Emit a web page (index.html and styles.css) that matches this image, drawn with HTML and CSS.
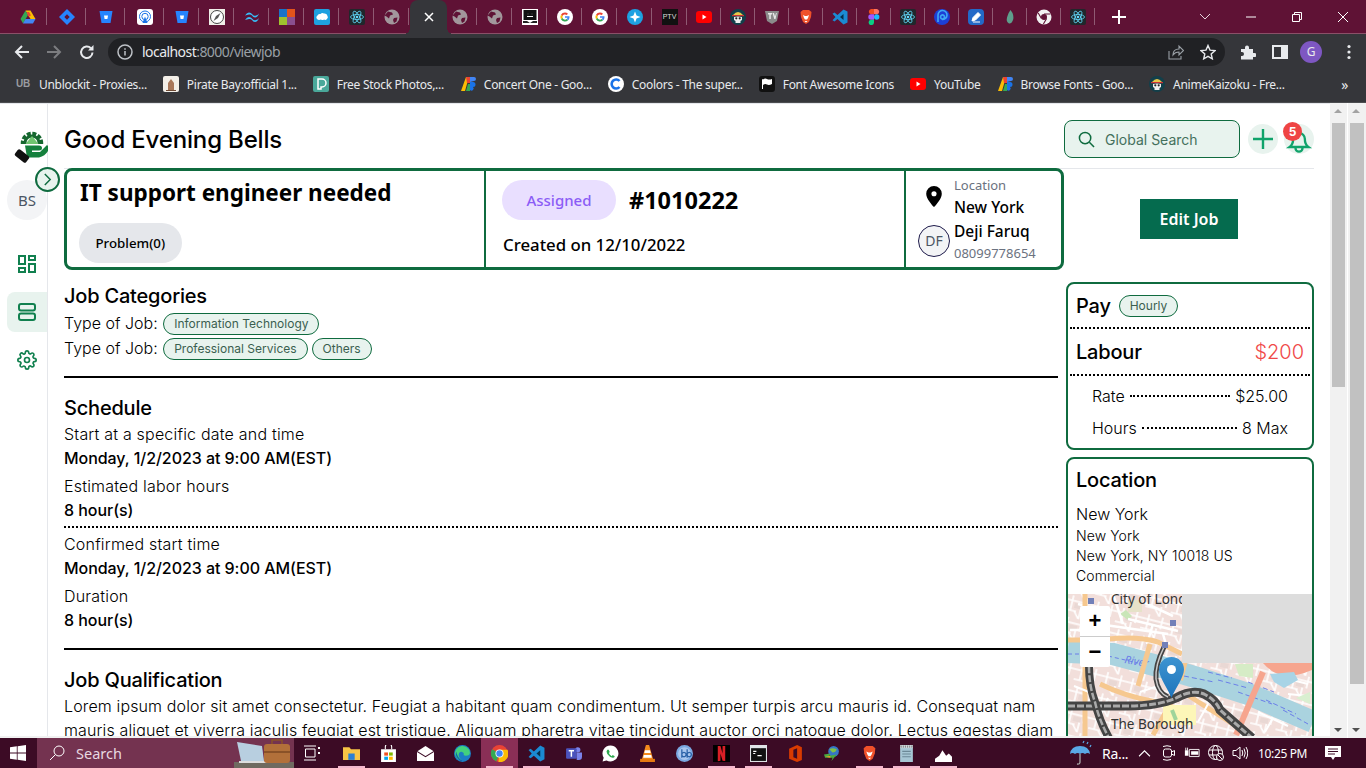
FILE: index.html
```html
<!DOCTYPE html>
<html lang="en">
<head>
<meta charset="UTF-8">
<meta name="viewport" content="width=device-width, initial-scale=1.0">
<title>View Job</title>
<link rel="stylesheet" href="styles.css">
</head>
<body>

<svg class="defs" width="0" height="0">
  <symbol id="i-globe" viewBox="0 0 16 16">
    <circle cx="8" cy="8" r="7.500" fill="#a2979c"/>
    <path d="M4 2.500l4 1 1 2-3 1-1 3-2.500-2-2-1zM10 9l3.500-.5-1 4-2.500 1.500-1-3z" fill="#5f1235"/>
  </symbol>
  <symbol id="i-react" viewBox="0 0 16 16">
    <rect width="16" height="16" rx="2" fill="#20272b"/>
    <g fill="none" stroke="#61dafb" stroke-width=".8">
      <ellipse cx="8" cy="8" rx="6.500" ry="2.500"/>
      <ellipse cx="8" cy="8" rx="6.500" ry="2.500" transform="rotate(60 8 8)"/>
      <ellipse cx="8" cy="8" rx="6.500" ry="2.500" transform="rotate(120 8 8)"/>
    </g>
    <circle cx="8" cy="8" r="1.300" fill="#61dafb"/>
  </symbol>
  <symbol id="i-bitbucket" viewBox="0 0 16 16">
    <path d="M1.500 2h13l-2 12h-9z" fill="#2684ff"/>
    <path d="M6 6.500h4l-.6 3.500H6.600z" fill="#fff"/>
  </symbol>
  <symbol id="i-google" viewBox="0 0 16 16">
    <circle cx="8" cy="8" r="8" fill="#fff"/>
    <path d="M8 3.500a4.500 4.500 0 0 1 3 1.200l-1.300 1.300A2.600 2.600 0 0 0 5.600 7.100L4 5.800A4.500 4.500 0 0 1 8 3.500z" fill="#ea4335"/>
    <path d="M4 5.800l1.600 1.300a2.600 2.600 0 0 0 0 1.800L4 10.200a4.500 4.500 0 0 1 0-4.400z" fill="#fbbc05"/>
    <path d="M4 10.200l1.600-1.300a2.600 2.600 0 0 0 4 1.200l1.500 1.200A4.500 4.500 0 0 1 4 10.200z" fill="#34a853"/>
    <path d="M12.500 8c0 1.400-.5 2.500-1.400 3.300L9.600 10.100c.5-.4.800-.9 1-1.400H8V7.200h4.400c.1.300.1.500.1.800z" fill="#4285f4"/>
  </symbol>
  <symbol id="i-blocks" viewBox="0 0 16 16">
    <path d="M1 15L6 1h3l-4 14z" fill="#fbbc04"/>
    <path d="M6 1h4v6H7z" fill="#ea4335"/>
    <path d="M10 1h4a2 2 0 0 1 0 4l-4 1z" fill="#4285f4"/>
    <path d="M6 15l2-7h2v7z" fill="#34a853"/>
    <path d="M10 6h3a2.500 2.500 0 0 1 0 5 2 2 0 0 1-3 3z" fill="#1a73e8"/>
  </symbol>
  <symbol id="i-brave" viewBox="0 0 16 16">
    <path d="M5 1h6l2.500 2-.5 5-2 5-3 2-3-2-2-5L2.500 3z" fill="#f0512a"/>
    <path d="M5 6l2 1 1 0 1 0 2-1-1 3-1 1.500h-2L6 9zM6.500 12h3L8 13.500z" fill="#fff"/>
  </symbol>
  <symbol id="i-vscode" viewBox="0 0 16 16">
    <path d="M11.500.5L15.500 2.500v11l-4 2L5.500 10l-3 2.500-2-1.200L3.500 8 .5 4.700l2-1.200 3 2.500z" fill="#1b8ad3"/>
    <path d="M11.500 5l-3.500 3 3.500 3z" fill="#062f4d"/>
  </symbol>
  <symbol id="i-skull" viewBox="0 0 16 16">
    <circle cx="8" cy="8" r="8" fill="#123f4a"/>
    <path d="M3 6q5-6 10 0z" fill="#e8c84a"/>
    <path d="M2 6h12v1.200H2z" fill="#c33"/>
    <path d="M4 8q4-1 8 0v3l-1.500 1v2h-5v-2L4 11z" fill="#eee"/>
    <circle cx="6.300" cy="9.300" r="1.100" fill="#222"/>
    <circle cx="9.700" cy="9.300" r="1.100" fill="#222"/>
  </symbol>
  <symbol id="i-youtube" viewBox="0 0 16 16">
    <rect y="2" width="16" height="12" rx="3" fill="#f00"/>
    <path d="M6.500 5.500l4 2.500-4 2.500z" fill="#fff"/>
  </symbol>
</svg>

<div class="tabbar">
  <div class="tab tab-wide"><svg class="fav" viewBox="0 0 16 16"><path d="M5.500 1.500h5L15.500 10h-5z" fill="#fbbc04"/><path d="M5.500 1.500L.5 10l2.500 4.500L8 6z" fill="#34a853"/><path d="M3 14.500h10l2.500-4.500h-10z" fill="#4285f4"/><path d="M7 3h2l2 3.500-3 1z" fill="#ea4335"/></svg></div>
  <div class="tab tab-wide"><svg class="fav" viewBox="0 0 16 16"><path d="M8 0l8 8-8 8-8-8z" fill="#2684ff"/><path d="M8 5.300L10.700 8 8 10.700 5.300 8z" fill="#5f1235"/></svg></div>
  <div class="tab tab-wide"><svg class="fav"><use href="#i-bitbucket"/></svg></div>
  <div class="tab tab-wide"><svg class="fav" viewBox="0 0 16 16"><rect width="16" height="16" rx="3" fill="#fff"/><circle cx="8" cy="7.500" r="5.500" fill="none" stroke="#1a73e8" stroke-width="1"/><circle cx="8" cy="7.500" r="3.200" fill="none" stroke="#1a73e8" stroke-width="1"/><path d="M5.500 14L8 7.500l2.500 6.500z" fill="#1a73e8"/></svg></div>
  <div class="tab"><svg class="fav"><use href="#i-bitbucket"/></svg></div>
  <div class="tab"><svg class="fav" viewBox="0 0 16 16"><rect width="16" height="16" fill="#f0efe9"/><circle cx="8" cy="8" r="6.500" fill="#fff" stroke="#444"/><path d="M11.500 4L9 9 4.500 12 7 7z" fill="#555"/></svg></div>
  <div class="tab"><svg class="fav" viewBox="0 0 16 16"><path d="M1 6.500q2-3 4-3t3.500 2 3.500 1q1.500 0 3-2-1.500 4-4 4-2 0-3-2-1.500-1.500-3-1-2 .3-4 1zM1 11q2-3 4-3t3.500 2 3.500 1q1.500 0 3-2-1.500 4-4 4-2 0-3-2-1.500-1.500-3-1-2 .3-4 1z" fill="#38bdf8"/></svg></div>
  <div class="tab"><svg class="fav" viewBox="0 0 16 16"><rect width="8" height="8" fill="#1a73c8"/><rect x="8" width="8" height="8" fill="#e2541b"/><rect y="8" width="8" height="8" fill="#9fc22e"/><rect x="8" y="8" width="8" height="8" fill="#8a4f8f"/></svg></div>
  <div class="tab"><svg class="fav" viewBox="0 0 16 16"><rect width="16" height="16" rx="2" fill="#1ea1e0"/><path d="M3 10q-1.500-2 .5-3.500Q4 4.500 6.500 5 8 3.500 10 4.500q3-.5 3.500 2.500 1 1.500-.5 3-1.500 1.500-3 .5-1.500 1-3 0-2.500 1-4-.5z" fill="#fff"/></svg></div>
  <div class="tab"><svg class="fav"><use href="#i-react"/></svg></div>
  <div class="tab"><svg class="fav"><use href="#i-globe"/></svg></div>
  <div class="tab tab-active"><svg class="tab-x" viewBox="0 0 10 10"><path d="M1 1l8 8M9 1l-8 8" stroke="#fff" stroke-width="1.500"/></svg></div>
  <div class="tab tab-after"><svg class="fav"><use href="#i-globe"/></svg></div>
  <div class="tab"><svg class="fav"><use href="#i-globe"/></svg></div>
  <div class="tab"><svg class="fav" viewBox="0 0 16 16"><rect width="16" height="16" fill="#fff"/><rect x="1.500" y="1" width="13" height="10" fill="#111"/><path d="M5 4h2v2H5zM9 4h2v2H9zM1 12h4l3 2 3-2h4v2H1z" fill="#222"/><path d="M5 7h6v1H5z" fill="#fff"/></svg></div>
  <div class="tab"><svg class="fav"><use href="#i-google"/></svg></div>
  <div class="tab"><svg class="fav"><use href="#i-google"/></svg></div>
  <div class="tab"><svg class="fav" viewBox="0 0 16 16"><circle cx="8" cy="8" r="8" fill="#1da1e2"/><path d="M8 2.500l1.500 4 4 1.500-4 1.500-1.500 4-1.500-4-4-1.500 4-1.500z" fill="#fff"/></svg></div>
  <div class="tab"><span class="fav fav-ptv">PTV</span></div>
  <div class="tab tab-n"><svg class="fav"><use href="#i-youtube"/></svg></div>
  <div class="tab tab-n"><svg class="fav"><use href="#i-skull"/></svg></div>
  <div class="tab tab-n"><svg class="fav" viewBox="0 0 16 16"><path d="M1 2h14l-2 10-5 3-5-3z" fill="#8b8b8b"/><path d="M4 4h4v1.500H6.800V10H5.300V5.500H4zM8.500 4h1.500l1 3.500L12 4h.8L11.500 10h-1.200z" fill="#e8e8e8"/></svg></div>
  <div class="tab tab-n"><svg class="fav"><use href="#i-brave"/></svg></div>
  <div class="tab tab-n"><svg class="fav"><use href="#i-vscode"/></svg></div>
  <div class="tab tab-n"><svg class="fav" viewBox="0 0 16 16"><path d="M5 0h3v5.300H5a2.700 2.700 0 0 1 0-5.300z" fill="#f24e1e"/><path d="M8 0h3a2.700 2.700 0 0 1 0 5.300H8z" fill="#ff7262"/><path d="M5 5.300h3v5.400H5a2.700 2.700 0 0 1 0-5.400z" fill="#a259ff"/><circle cx="10.700" cy="8" r="2.700" fill="#1abcfe"/><path d="M5 10.700h3v2.700a2.700 2.700 0 1 1-3-2.700z" fill="#0acf83"/></svg></div>
  <div class="tab tab-n"><svg class="fav"><use href="#i-react"/></svg></div>
  <div class="tab tab-n"><svg class="fav" viewBox="0 0 16 16"><circle cx="8" cy="8" r="8" fill="#1d3fd6"/><path d="M4 13V6a4.500 4.500 0 1 1 4 4.500M6.500 8a2 2 0 1 0 0-.1" fill="none" stroke="#3fa8f5" stroke-width="1.600"/></svg></div>
  <div class="tab tab-n"><svg class="fav" viewBox="0 0 16 16"><rect width="16" height="16" rx="4" fill="#2369c8"/><path d="M4 12l1-3.500 5-5 2.500 2.500-5 5zM5 13h7" fill="#fff" stroke="#fff"/></svg></div>
  <div class="tab tab-n"><svg class="fav" viewBox="0 0 16 16"><path d="M8.500 1q4 5 2.500 10-1.500 4-4 3.500Q4 13 5 8.500 6 4 8.500 1z" fill="#5f9e8c"/></svg></div>
  <div class="tab tab-n"><svg class="fav" viewBox="0 0 16 16"><circle cx="8" cy="8" r="7.500" fill="#f1f1f1"/><circle cx="8" cy="8" r="3" fill="#5f1235"/><path d="M8 5h6.500M5.400 9.500L2.200 4M10.600 9.500L7.400 15" stroke="#5f1235" stroke-width="1.100"/></svg></div>
  <div class="tab tab-n"><svg class="fav"><use href="#i-react"/></svg></div>
  <div class="newtab"><svg viewBox="0 0 14 14" width="14" height="14"><path d="M7 0v14M0 7h14" stroke="#fff" stroke-width="2"/></svg></div>
  <div class="caption">
    <svg class="cap-chev" viewBox="0 0 12 8" width="12" height="8"><path d="M1 1l5 5 5-5" fill="none" stroke="#e6d3dc" stroke-width="1"/></svg>
    <svg class="cap-btn" viewBox="0 0 12 12"><path d="M1 6h10" stroke="#fff" stroke-width="1"/></svg>
    <svg class="cap-btn" viewBox="0 0 12 12"><path d="M1.500 3.500h7v7h-7zM3.500 3.500v-2h7v7h-2" fill="none" stroke="#fff" stroke-width="1"/></svg>
    <svg class="cap-btn" viewBox="0 0 12 12"><path d="M1 1l10 10M11 1L1 11" stroke="#fff" stroke-width="1"/></svg>
  </div>
</div>

<div class="toolbar">
  <svg class="tool tool-back" viewBox="0 0 16 16"><path d="M15 8H2M8 2L2 8l6 6" fill="none" stroke="#e8eaed" stroke-width="2"/></svg>
  <svg class="tool tool-fwd" viewBox="0 0 16 16"><path d="M1 8h13M8 2l6 6-6 6" fill="none" stroke="#7c7d80" stroke-width="2"/></svg>
  <svg class="tool tool-reload" viewBox="0 0 16 16"><path d="M13.500 8.500a5.700 5.700 0 1 1-1.600-4.200" fill="none" stroke="#e8eaed" stroke-width="2"/><path d="M14.500 1v5.500H9z" fill="#e8eaed"/></svg>
  <div class="omnibox">
    <svg class="omni-info" viewBox="0 0 16 16"><circle cx="8" cy="8" r="7" fill="none" stroke="#bdc1c6" stroke-width="1.500"/><path d="M8 7v4.500M8 4.300v1.400" stroke="#bdc1c6" stroke-width="1.500"/></svg>
    <span class="url"><span class="url-host">localhost</span>:8000/viewjob</span>
    <svg class="omni-share" viewBox="0 0 16 16"><path d="M1 7v8h12v-3M5 11q0-6 6-6V2l4.500 4.500L11 11V8q-4 0-6 3z" fill="none" stroke="#9aa0a6" stroke-width="1.100"/></svg>
    <svg class="omni-star" viewBox="0 0 16 16"><path d="M8 1.500l2 4.600 5 .5-3.800 3.300 1.100 4.900L8 12.300l-4.300 2.500 1.100-4.900L1 6.600l5-.5z" fill="none" stroke="#e8eaed" stroke-width="1.400"/></svg>
  </div>
  <svg class="tool tool-puzzle" viewBox="0 0 16 16"><path d="M1 5h4V3.500a2 2 0 0 1 4 0V5h4v4h1.500a2 2 0 0 1 0 4H13v2.500H1V12h1a2 2 0 0 0 0-4H1z" fill="#e8eaed"/></svg>
  <svg class="tool tool-side" viewBox="0 0 16 16"><path d="M1 2h14v12H1z" fill="#35363a" stroke="#e8eaed" stroke-width="2"/><path d="M9 2h6v12H9z" fill="#e8eaed"/></svg>
  <span class="profile">G</span>
  <svg class="tool tool-dots" viewBox="0 0 4 16"><circle cx="2" cy="2.500" r="1.600" fill="#e8eaed"/><circle cx="2" cy="8" r="1.600" fill="#e8eaed"/><circle cx="2" cy="13.500" r="1.600" fill="#e8eaed"/></svg>
</div>

<div class="bookmarks">
  <a class="bm"><span class="bm-icon bm-ub">UB</span>Unblockit - Proxies...</a>
  <a class="bm"><svg class="bm-icon" viewBox="0 0 16 16"><rect width="16" height="16" rx="2" fill="#f3efe8"/><path d="M5 14V7l3-4 3 4v7z" fill="#a9785a"/><path d="M3 14h10v1H3z" fill="#6e4a34"/></svg>Pirate Bay:official 1...</a>
  <a class="bm"><svg class="bm-icon" viewBox="0 0 16 16"><rect width="16" height="16" rx="2" fill="#4aa89a"/><path d="M5 3h4a3 3 0 0 1 0 8H8v2H5z" fill="none" stroke="#fff" stroke-width="1.500"/></svg>Free Stock Photos,...</a>
  <a class="bm"><svg class="bm-icon"><use href="#i-blocks"/></svg>Concert One - Goo...</a>
  <a class="bm"><svg class="bm-icon" viewBox="0 0 16 16"><circle cx="8" cy="8" r="8" fill="#fff"/><path d="M11.500 5a4.500 4.500 0 1 0 0 6" fill="none" stroke="#1a73e8" stroke-width="2.600"/></svg>Coolors - The super...</a>
  <a class="bm"><svg class="bm-icon" viewBox="0 0 16 16"><rect width="16" height="16" rx="3" fill="#111"/><path d="M3 3v10h1V9q2-1.500 4-.5t5-.5V3q-3 1-5 0t-4 .5z" fill="#fff"/></svg>Font Awesome Icons</a>
  <a class="bm"><svg class="bm-icon"><use href="#i-youtube"/></svg>YouTube</a>
  <a class="bm"><svg class="bm-icon"><use href="#i-blocks"/></svg>Browse Fonts - Goo...</a>
  <a class="bm"><svg class="bm-icon"><use href="#i-skull"/></svg>AnimeKaizoku - Fre...</a>
  <span class="bm-more">»</span>
</div>

<div class="viewport">
  <div class="page">
    <aside class="sidebar">
      <svg class="logo" viewBox="0 0 34 32">
        <circle cx="18" cy="12" r="9.500" fill="none" stroke="#15672f" stroke-width="3.500" stroke-dasharray="4 1.600"/>
        <circle cx="18" cy="12" r="8.500" fill="#15672f"/>
        <rect x="4" y="13" width="29" height="12" fill="#fff"/>
        <circle cx="18" cy="12" r="5.500" fill="#fff"/>
        <path d="M18 5l6.500 8h-13z" fill="#6fc46f"/>
        <path d="M11 14.500h14q3 0 3 2.500t-3 2.500h-7v1.500h8l7-7 1 1v5q-3 5-9 6.500H13z" fill="#15803d"/>
        <rect x="1" y="21" width="14" height="8" rx="2" transform="rotate(38 8 25)" fill="#111"/>
      </svg>
      <div class="avatar-wrap">
        <span class="avatar-bs">BS</span>
        <span class="collapse"><svg viewBox="0 0 10 14" width="9" height="13"><path d="M2 1l6 6-6 6" fill="none" stroke="#0f6b3f" stroke-width="1.600"/></svg></span>
      </div>
      <nav class="side-nav">
        <span class="side-item"><svg viewBox="0 0 18 18" width="18" height="18"><path d="M1 1h6v8H1zM11 1h6v4h-6zM11 9h6v8h-6zM1 13h6v4H1z" fill="none" stroke="#11804f" stroke-width="2"/></svg></span>
        <span class="side-item side-active"><svg viewBox="0 0 18 18" width="18" height="18"><rect x="1" y="1" width="16" height="6.500" rx="2" fill="none" stroke="#11804f" stroke-width="2"/><rect x="1" y="10.500" width="16" height="6.500" rx="2" fill="none" stroke="#11804f" stroke-width="2"/></svg></span>
        <span class="side-item"><svg viewBox="0 0 24 24" width="20" height="20" fill="none" stroke="#11804f" stroke-width="2" stroke-linecap="round" stroke-linejoin="round"><circle cx="12" cy="12" r="3"/><path d="M19.400 15a1.650 1.650 0 0 0 .33 1.820l.06.06a2 2 0 1 1-2.830 2.830l-.06-.06a1.650 1.650 0 0 0-1.820-.33 1.650 1.650 0 0 0-1 1.510V21a2 2 0 1 1-4 0v-.09a1.650 1.650 0 0 0-1.080-1.510 1.650 1.650 0 0 0-1.820.33l-.06.06a2 2 0 1 1-2.830-2.830l.06-.06a1.650 1.650 0 0 0 .33-1.820 1.650 1.650 0 0 0-1.510-1H3a2 2 0 1 1 0-4h.09a1.650 1.650 0 0 0 1.510-1.080 1.650 1.650 0 0 0-.33-1.820l-.06-.06a2 2 0 1 1 2.830-2.830l.06.06a1.650 1.650 0 0 0 1.820.33H9a1.650 1.650 0 0 0 1-1.510V3a2 2 0 1 1 4 0v.09a1.650 1.650 0 0 0 1 1.510 1.650 1.650 0 0 0 1.820-.33l.06-.06a2 2 0 1 1 2.830 2.830l-.06.06a1.650 1.650 0 0 0-.33 1.820V9a1.650 1.650 0 0 0 1.510 1H21a2 2 0 1 1 0 4h-.09a1.650 1.650 0 0 0-1.510 1z"/></svg></span>
      </nav>
    </aside>

    <main class="content">
      <header class="topbar">
        <h1 class="greeting">Good Evening Bells</h1>
        <div class="search">
          <svg viewBox="0 0 18 18" width="17" height="17"><circle cx="7.500" cy="7.500" r="6" fill="none" stroke="#0f6b3f" stroke-width="1.600"/><path d="M12 12l5 5" stroke="#0f6b3f" stroke-width="1.600"/></svg>
          <span>Global Search</span>
        </div>
        <span class="round-btn"><svg viewBox="0 0 22 22" width="22" height="22"><path d="M11 1v20M1 11h20" stroke="#10a36b" stroke-width="2.400"/></svg></span>
        <span class="round-btn bell">
          <svg viewBox="0 0 24 24" width="28" height="28"><path d="M4 18q3-2 3-7a5 5 0 0 1 10 0q0 5 3 7zM9 19a3 3 0 0 0 6 0" fill="none" stroke="#10a36b" stroke-width="2"/></svg>
          <span class="badge">5</span>
        </span>
      </header>

      <section class="summary-row">
        <div class="job-card">
          <div class="job-col job-main">
            <h2 class="job-title">IT support engineer needed</h2>
            <span class="pill-problem">Problem(0)</span>
          </div>
          <div class="job-col job-status">
            <div class="status-line">
              <span class="pill-status">Assigned</span>
              <span class="job-number">#1010222</span>
            </div>
            <p class="created">Created on 12/10/2022</p>
          </div>
          <div class="job-col job-contact">
            <div class="contact-line">
              <svg class="pin" viewBox="0 0 18 24" width="18" height="22"><path d="M9 0a8.500 8.500 0 0 1 8.500 8.500C17.500 14 11 21 9 23 7 21 .5 14 .5 8.500A8.500 8.500 0 0 1 9 0z" fill="#000"/><circle cx="9" cy="8.500" r="2.800" fill="#fff"/></svg>
              <div><p class="muted">Location</p><p class="strong">New York</p></div>
            </div>
            <div class="contact-line">
              <span class="avatar-df">DF</span>
              <div><p class="strong">Deji Faruq</p><p class="muted">08099778654</p></div>
            </div>
          </div>
        </div>
        <div class="edit-cell"><button class="edit-btn">Edit Job</button></div>
      </section>

      <section class="columns">
        <div class="details">
          <h3 class="sec-title">Job Categories</h3>
          <p class="type-row">Type of Job: <span class="chip">Information Technology</span></p>
          <p class="type-row">Type of Job: <span class="chip">Professional Services</span><span class="chip">Others</span></p>
          <hr class="rule">
          <h3 class="sec-title">Schedule</h3>
          <p class="line">Start at a specific date and time</p>
          <p class="line line-b">Monday, 1/2/2023 at 9:00 AM(EST)</p>
          <p class="line line-gap">Estimated labor hours</p>
          <p class="line line-b">8 hour(s)</p>
          <hr class="dots">
          <p class="line">Confirmed start time</p>
          <p class="line line-b">Monday, 1/2/2023 at 9:00 AM(EST)</p>
          <p class="line line-gap">Duration</p>
          <p class="line line-b">8 hour(s)</p>
          <hr class="rule">
          <h3 class="sec-title">Job Qualification</h3>
          <p class="line lorem">Lorem ipsum dolor sit amet consectetur. Feugiat a habitant quam condimentum. Ut semper turpis arcu mauris id. Consequat nam mauris aliquet et viverra iaculis feugiat est tristique. Aliquam pharetra vitae tincidunt auctor orci natoque dolor. Lectus egestas diam</p>
        </div>

        <aside class="side-cards">
          <div class="card pay-card">
            <div class="pay-head"><span class="card-title">Pay</span><span class="chip">Hourly</span></div>
            <div class="pay-labour"><span class="card-title">Labour</span><span class="amount">$200</span></div>
            <div class="leader"><span>Rate</span><i></i><span>$25.00</span></div>
            <div class="leader"><span>Hours</span><i></i><span>8 Max</span></div>
          </div>
          <div class="card loc-card">
            <h3 class="card-title">Location</h3>
            <p class="loc-big">New York</p>
            <p class="loc-small">New York</p>
            <p class="loc-small">New York, NY 10018 US</p>
            <p class="loc-small">Commercial</p>
            <div class="map">
              <svg class="map-tiles" viewBox="0 0 244 144" width="244" height="144">
                <defs>
                  <clipPath id="tile"><path d="M0 0h114v69h130v75H0z"/></clipPath>
                  <pattern id="streets" width="26" height="22" patternUnits="userSpaceOnUse" patternTransform="rotate(14)">
                    <path d="M0 5h26M0 15h12M16 12v10M6 0v15M20 0v12M10 15l6 7" stroke="#fff" stroke-width="1.600" fill="none"/>
                    <path d="M9 7h8v5H9z" fill="#e9d8d4"/>
                  </pattern>
                </defs>
                <rect width="244" height="144" fill="#ddd"/>
                <g clip-path="url(#tile)">
                  <rect width="244" height="144" fill="#f2dfdb"/>
                  <rect width="244" height="144" fill="url(#streets)"/>
                  <path d="M60 6h14v12H60z" fill="#e6e2c8"/>
                  <path d="M52 20l6-4 6 6-4 4z" fill="#c9e6b8"/>
                  <path d="M0 58L45 60 90 72 130 84 180 100 245 128" fill="none" stroke="#aad3df" stroke-width="22"/>
                  <path d="M116 82l30 6M150 86l30 8M170 98l34 12M198 106l30 14M215 116l25 14M140 78l24 6M180 88l26 10" stroke="#6a7ee8" stroke-width="1" stroke-dasharray="5 3" fill="none"/>
                  <path d="M0 60H12M40 62l30 7" stroke="#6a7ee8" stroke-width="1" stroke-dasharray="4 3" fill="none"/>
                  <text x="56" y="69" class="map-river" transform="rotate(10 56 69)">River</text>
                  <path d="M10 10l30 8M45 0l10 30M60 25l50 12M30 30l70 10M75 8l30 14M2 36h30M85 30l-6 20M95 40l4 14" stroke="#fff" stroke-width="2.500" fill="none"/>
                  <path d="M40 45Q70 42 90 48L114 60" stroke="#f6c88f" stroke-width="5" fill="none"/>
                  <path d="M82 50L70 92" stroke="#f6c88f" stroke-width="5" fill="none"/>
                  <path d="M17 0V144M0 46h17" stroke="#f6c88f" stroke-width="5" fill="none"/>
                  <path d="M32 90q24 12 56 18M105 105l-20 36M118 100l50 32" stroke="#f6c88f" stroke-width="5" fill="none"/>
                  <path d="M118 62l-6 24" stroke="#f6c88f" stroke-width="6" fill="none"/>
                  <path d="M6 92l20 8M40 104l-10 24M90 92l-18 6M140 110l-10 18M190 118l30 14M205 124l-8 14M220 100l20 2M224 86l16 4" stroke="#fff" stroke-width="2" fill="none"/>
                  <path d="M95 111h33v20H95z" fill="#fdf6b8"/>
                  <path d="M104 116l4 10" stroke="#9fd49a" stroke-width="4"/>
                  <path d="M167 70h18v14l-14-2z" fill="#d6ecc6"/>
                  <path d="M168 141L195 78" stroke="#f6a58e" stroke-width="6" fill="none"/>
                  <path d="M195 69h49v7q-14 6-26 6-14-2-23-13z" fill="#f6a58e"/>
                  <path d="M202 80l24-2 4 8-14 8-10-6z" fill="#a8d4e6"/>
                  <path d="M228 104l14-6v12z" fill="#d9efd0"/>
                  <path d="M0 112H60Q90 112 108 104Q124 95 136 100Q148 106 152 116L184 144" fill="none" stroke="#444" stroke-width="9"/>
                  <path d="M0 112H60Q90 112 108 104Q124 95 136 100Q148 106 152 116L184 144" fill="none" stroke="#aaa" stroke-width="3" stroke-dasharray="7 2"/>
                  <path d="M21 72q0 20 6 36 4 18 14 36" fill="none" stroke="#444" stroke-width="8"/>
                  <path d="M21 72q0 20 6 36 4 18 14 36" fill="none" stroke="#aaa" stroke-width="2.500" stroke-dasharray="7 2"/>
                  <path d="M96 53q-9 18-8 32 2 14 12 18" fill="none" stroke="#444" stroke-width="5"/>
                  <path d="M96 53q-9 18-8 32 2 14 12 18" fill="none" stroke="#ccc" stroke-width="1.500"/>
                  <rect x="20" y="4" width="6" height="6" fill="#7280b8"/>
                  <rect x="102" y="26" width="6" height="6" fill="#7280b8"/>
                  <rect x="94" y="48" width="6" height="6" fill="#7280b8"/>
                  <text x="43" y="10" class="map-label">City of London</text>
                  <text x="43" y="135" class="map-label">The Borough</text>
                </g>
              </svg>
              <div class="zoom-ctl"><span>+</span><span>−</span></div>
              <svg class="marker" viewBox="0 0 25 41" width="25" height="41"><defs><linearGradient id="mk" x1="0" y1="0" x2="0" y2="1"><stop offset="0" stop-color="#3d94d1"/><stop offset="1" stop-color="#1f74bb"/></linearGradient></defs><path d="M12.500 0C5.500 0 0 5.500 0 12.500 0 20 9 32 12.500 41 16 32 25 20 25 12.500 25 5.500 19.500 0 12.500 0z" fill="url(#mk)"/><circle cx="12.500" cy="12.500" r="4.500" fill="#fff"/></svg>
            </div>
          </div>
        </aside>
      </section>
    </main>
  </div>

  <div class="scrollbar scroll-inner"><span class="arrow-up"></span><span class="thumb"></span><span class="arrow-down"></span></div>
  <div class="scrollbar scroll-outer"><span class="arrow-up"></span><span class="thumb"></span><span class="arrow-down"></span></div>
</div>

<div class="taskbar">
  <svg class="win" viewBox="0 0 16 16" width="16" height="16"><path d="M0 2.300l6.800-1v6.300H0zM7.600 1.200L16 0v7.600H7.600zM0 8.400h6.800v6.300l-6.800-1zM7.600 8.400H16V16l-8.400-1.200z" fill="#fff"/></svg>
  <div class="tb-search">
    <svg viewBox="0 0 16 16" width="16" height="16"><circle cx="10" cy="6" r="5" fill="none" stroke="#fff"/><path d="M6.500 9.500L1 15" stroke="#fff"/></svg>
    <span>Search</span>
    <svg class="tb-art" viewBox="0 0 60 30" width="60" height="30"><path d="M0 24h60v6H0z" fill="#6f6a60"/><path d="M3 4l25 4 2 15H7z" fill="#b8cfe0"/><path d="M5 23h26l3 2H5z" fill="#ddd"/><rect x="30" y="6" width="26" height="19" rx="3" fill="#b2703a"/><path d="M38 6V2h10v4" fill="none" stroke="#8a5228" stroke-width="1.500"/><path d="M30 13h26v2H30z" fill="#8a5228"/></svg>
  </div>
  <svg class="tb-view" viewBox="0 0 16 16" width="16" height="16"><path d="M1.500 4h9.500v8H1.500zM0 1h12M0 15h12" fill="none" stroke="#fff"/><path d="M14 2h2v2h-2zM14 7h2v2h-2z" fill="#fff"/></svg>
  <div class="tb-apps">
    <span class="tb-app tb-on"><svg viewBox="0 0 16 16"><path d="M0 2h6l1.500 2H16v10H0z" fill="#f6c445"/><path d="M5 8h6v6H5z" fill="#2a7fd3"/></svg></span>
    <span class="tb-app"><svg viewBox="0 0 16 16"><path d="M1 4h14v12H1z" fill="#fff"/><path d="M5 4V2a3 3 0 0 1 6 0v2" fill="none" stroke="#fff"/><path d="M4 7h3.500v3H4z" fill="#f25022"/><path d="M8.500 7H12v3H8.500z" fill="#7fba00"/><path d="M4 11h3.500v3H4z" fill="#00a4ef"/><path d="M8.500 11H12v3H8.500z" fill="#ffb900"/></svg></span>
    <span class="tb-app"><svg viewBox="0 0 16 16"><path d="M0 6l8-5 8 5v9H0z" fill="#fff"/><path d="M0 6l8 5 8-5" fill="none" stroke="#3c0b25"/></svg></span>
    <span class="tb-app"><svg viewBox="0 0 16 16"><circle cx="8" cy="8" r="8" fill="#1b7fc4"/><path d="M1 9a7 7 0 0 1 14-2q0 3-4 3-1 0-2-.5 1-2-1.500-3C4 6 3 11 7 14c-3 .5-5-2-6-5z" fill="#42d17d"/><path d="M4 13q-3-3-2-7 1 6 6 9-2 .5-4-2z" fill="#0d5fa8"/></svg></span>
    <span class="tb-app tb-active tb-on"><svg viewBox="0 0 16 16"><circle cx="8" cy="8" r="8" fill="#ea4335"/><path d="M8 8L1 4a8 8 0 0 0 4 11.500z" fill="#34a853"/><path d="M8 4.500h7.500A8 8 0 0 1 7 16z" fill="#fbbc05"/><circle cx="8" cy="8" r="3.800" fill="#fff"/><circle cx="8" cy="8" r="3" fill="#4285f4"/></svg></span>
    <span class="tb-app tb-on"><svg><use href="#i-vscode"/></svg></span>
    <span class="tb-app"><svg viewBox="0 0 16 16"><circle cx="12" cy="4.500" r="2.500" fill="#7b83eb"/><rect x="1" y="3" width="10" height="10" rx="1" fill="#4b53bc"/><path d="M3.500 5.500h5M6 5.500v5.500" stroke="#fff" stroke-width="1.400"/><path d="M11 7h5v4q0 3-3 3h-2z" fill="#7b83eb"/></svg></span>
    <span class="tb-app"><svg viewBox="0 0 16 16"><path d="M8 .5a7.500 7.500 0 0 0-6.400 11.400L.5 15.500l3.700-1A7.500 7.500 0 1 0 8 .5z" fill="#fff"/><path d="M5 4.500q-1.500 1.500 0 4 2 3 5 3.500 1.800 0 2-1.500l-2-1-.8 1Q7 9.500 6.500 7.500l.8-1-1-2z" fill="#2fa84f"/></svg></span>
    <span class="tb-app"><svg viewBox="0 0 16 16"><path d="M6.500 0h3l4 14h-11z" fill="#f48a1d"/><path d="M5.600 5h4.800l.6 2.500H5zM4.500 9.500h7l.6 2.500H3.900z" fill="#fff"/><path d="M1 13h14v3H1z" fill="#e57a12"/></svg></span>
    <span class="tb-app"><svg viewBox="0 0 16 16"><circle cx="8" cy="8" r="8" fill="#7aa7e0"/><circle cx="8" cy="8" r="6" fill="#a9c6ee"/><path d="M5.500 4v8M5.500 9a2 2 0 1 1 0 .1M10.500 4v8M10.500 9a2 2 0 1 1 0 .1" fill="none" stroke="#2b62a8" stroke-width="1.200"/></svg></span>
    <span class="tb-app tb-on"><svg viewBox="0 0 16 16"><rect width="16" height="16" fill="#000"/><path d="M4.500 1h2.500l2 7V1h2.500v14q-1.200-.2-2.500-.2L7 8v6.800q-1.300.1-2.500.4z" fill="#d81f26"/></svg></span>
    <span class="tb-app tb-on"><svg viewBox="0 0 16 16"><rect width="16" height="16" fill="#dfe3e6"/><rect x="1" y="3" width="14" height="12" fill="#111"/><path d="M3 6h3M3 8h2M7 10h4" stroke="#fff"/></svg></span>
    <span class="tb-app"><svg viewBox="0 0 16 16"><path d="M9.500 0L14 2v12l-4.500 2L2 13V3.500z" fill="#d83b01"/><path d="M6 4.500l3.500-1.500v10L6 11.500z" fill="#3c0b25"/></svg></span>
    <span class="tb-app"><svg viewBox="0 0 16 16"><circle cx="9" cy="6" r="5" fill="#3576c7"/><path d="M5 4q3-2 7 0-1 3-4 3z" fill="#7ec14a"/><path d="M0 9l6-1-1 2 7-1-5 6 1-3-7 0z" fill="#48a942"/><path d="M1 11l5-1 0 2z" fill="#e2a021"/></svg></span>
    <span class="tb-app tb-on"><svg><use href="#i-brave"/></svg></span>
    <span class="tb-app tb-on"><svg viewBox="0 0 16 16"><path d="M2 2h12v14H2z" fill="#a6c6d4"/><path d="M4 6h8M4 8.500h8M4 11h8" stroke="#6b8896"/><path d="M2 0h12v3H2z" fill="#cfd8dc"/><path d="M3 .5v2M5 .5v2M7 .5v2M9 .5v2M11 .5v2M13 .5v2" stroke="#555" stroke-width=".6"/></svg></span>
    <span class="tb-app tb-on"><svg viewBox="0 0 16 16"><rect width="16" height="16" fill="#fff"/><path d="M0 0h16v11l-3-3-2.500 2L7 5l-3 5-4 3z" fill="#3c0b25"/></svg></span>
  </div>
  <div class="tray">
    <svg class="tray-rain" viewBox="0 0 24 26" width="24" height="26"><path d="M1 14q1-8 10-8t10 8q-2.500-2-5 0-2.500-2-5 0-2.500-2-5 0-2.500-2-5 0z" fill="#5aa9e6"/><path d="M11 14v8q0 2.500-3 2" fill="none" stroke="#aaa" stroke-width="1.300"/><path d="M15 1l-1 2M19 2l-1 2M22 5l-1 2" stroke="#5aa9e6" stroke-width="1.200"/></svg>
    <span class="tray-text">Ra...</span>
    <svg class="tray-i tray-caret" viewBox="0 0 12 8"><path d="M1 7l5-5 5 5" fill="none" stroke="#fff"/></svg>
    <svg class="tray-i" viewBox="0 0 16 16"><rect x="3.500" y="4" width="8" height="8" rx="2" fill="none" stroke="#fff"/><path d="M11.500 7l3-1.500v5l-3-1.500M3 1.500q4-1.500 8 0M3 14.500q4 1.500 8 0" fill="none" stroke="#fff"/></svg>
    <svg class="tray-i" viewBox="0 0 18 16"><path d="M6 4h11v8H6z" fill="none" stroke="#fff"/><path d="M8 6h8v4H8zM1 8h5M1 5h4v6H1z" fill="#fff"/><path d="M2 2v3M4 2v3" stroke="#fff"/></svg>
    <svg class="tray-i" viewBox="0 0 16 16"><circle cx="7.500" cy="7.500" r="7" fill="none" stroke="#fff"/><ellipse cx="7.500" cy="7.500" rx="3" ry="7" fill="none" stroke="#fff"/><path d="M1 5h13M1 10h13" stroke="#fff"/><circle cx="12" cy="12" r="3.500" fill="#3c0b25" stroke="#fff"/><path d="M10 10l4 4" stroke="#fff"/></svg>
    <svg class="tray-i" viewBox="0 0 16 16"><path d="M1 5.500h3L8 2v12l-4-3.500H1z" fill="none" stroke="#fff"/><path d="M10 5q1.500 3 0 6M12 3.500q2.500 4.500 0 9M14 2q3.500 6 0 12" fill="none" stroke="#fff"/></svg>
    <span class="tray-time">10:25 PM</span>
    <svg class="tray-note" viewBox="0 0 16 16" width="16" height="16"><path d="M0 1h16v11h-6l-2 3-2-3H0z" fill="#fff"/><path d="M3 4h10M3 6.500h10M3 9h7" stroke="#3c0b25"/></svg>
  </div>
</div>

</body>
</html>
```

FILE: styles.css
```css
* {
    box-sizing: border-box;
}
html, body {
    margin: 0;
    height: 100%;
    overflow: hidden;
}
body {
    width: 1366px;
    height: 768px;
    font-family: Inter, "Liberation Sans", sans-serif;
    color: #000;
    display: flex;
    flex-direction: column;
}
h1, h2, h3, p {
    margin: 0;
}
.defs {
    position: absolute;
}

/* browser chrome */
.tabbar {
    height: 34px;
    flex: none;
    background: #5f1235;
    border-bottom: 1px solid #8a5068;
    display: flex;
    align-items: stretch;
    padding-left: 8px;
}
.tab {
    width: 35px;
    flex: none;
    display: flex;
    align-items: center;
    justify-content: center;
    position: relative;
}
.tab::after {
    content: "";
    position: absolute;
    right: 0;
    top: 8px;
    height: 17px;
    width: 1px;
    background: #8f5a73;
}
.tab-wide {
    width: 39px;
}
.tab-n {
    width: 34px;
}
.tab-active {
    width: 37px;
    margin-left: 1px;
    background: #35363a;
    border-radius: 8px 8px 0 0;
    height: 34px;
    z-index: 1;
}
.tab-active::before,
.tab-active::after {
    content: "";
    position: absolute;
    top: auto;
    bottom: 0;
    width: 6px;
    height: 6px;
    background: radial-gradient(circle at 0 0, transparent 6px, #35363a 6px);
}
.tab-active::before {
    left: -6px;
}
.tab-active::after {
    right: -6px;
    background: radial-gradient(circle at 100% 0, transparent 6px, #35363a 6px);
}
.tab-after {
    margin-left: -5px;
}
.fav {
    width: 16px;
    height: 16px;
    display: block;
}
.fav-ptv {
    background: #111;
    color: #ddd;
    font: 7px "Liberation Sans", sans-serif;
    line-height: 16px;
    text-align: center;
}
.tab-x {
    width: 10px;
    height: 10px;
}
.newtab {
    width: 48px;
    flex: none;
    display: flex;
    align-items: center;
    justify-content: center;
}
.caption {
    flex: 1;
    display: flex;
    align-items: center;
    padding-right: 17px;
    padding-left: 56px;
}
.cap-chev {
    margin-right: 34px;
}
.cap-btn {
    width: 12px;
    height: 12px;
    margin-right: 34px;
}
.cap-btn:last-child {
    margin-right: 0;
}
.toolbar {
    height: 35px;
    flex: none;
    background: #35363a;
    display: flex;
    align-items: center;
    padding-left: 14px;
}
.tool {
    width: 16px;
    height: 16px;
    flex: none;
}
.tool-fwd {
    margin-left: 16px;
}
.tool-reload {
    margin-left: 17px;
}
.omnibox {
    width: 1117px;
    height: 28px;
    margin-left: 13px;
    border-radius: 14px;
    background: #202124;
    display: flex;
    align-items: center;
    padding: 0 9px;
    color: #9aa0a6;
    font: 14px "Noto Sans", sans-serif;
    letter-spacing: -.55px;
    flex: none;
}
.omni-info {
    width: 16px;
    height: 16px;
}
.url {
    margin-left: 9px;
    flex: 1;
}
.url-host {
    color: #e8eaed;
}
.omni-share {
    width: 16px;
    height: 16px;
    margin-right: 16px;
}
.omni-star {
    width: 16px;
    height: 16px;
}
.tool-puzzle {
    margin-left: 15px;
}
.tool-side {
    margin-left: 16px;
}
.profile {
    width: 22px;
    height: 22px;
    border-radius: 50%;
    background: #7e57c2;
    color: #e8eaed;
    font: 12px/22px "Noto Sans", sans-serif;
    text-align: center;
    margin-left: 12px;
    flex: none;
}
.tool-dots {
    width: 4px;
    margin-left: 25px;
}
.bookmarks {
    height: 34px;
    flex: none;
    background: #35363a;
    border-bottom: 1px solid #4c4d50;
    display: flex;
    align-items: center;
    gap: 16px;
    padding: 0 0 3px 15px;
    color: #e8eaed;
    font: 12px "Noto Sans", sans-serif;
    letter-spacing: -.29px;
    position: relative;
}
.bm {
    display: flex;
    align-items: center;
    gap: 8px;
    white-space: nowrap;
}
.bm-icon {
    width: 16px;
    height: 16px;
    flex: none;
}
.bm-ub {
    color: #9a9ca0;
    font: bold 10px/16px "Liberation Sans", sans-serif;
    text-align: center;
}
.bm-more {
    position: absolute;
    right: 18px;
    top: 6px;
    font-size: 14px;
}

/* page */
.viewport {
    flex: 1;
    min-height: 0;
    display: flex;
    overflow: hidden;
    background: #fff;
    box-shadow: inset 0 1px 0 #e5e7eb;
}
.page {
    width: 1330px;
    flex: none;
    display: flex;
    overflow: hidden;
    border-bottom: 2px solid #f1f1f1;
}
.sidebar {
    width: 48px;
    flex: none;
    border-right: 1px solid #e5e7eb;
    position: relative;
}
.logo {
    position: absolute;
    left: 14px;
    top: 28px;
    width: 34px;
    height: 32px;
}
.avatar-wrap {
    position: absolute;
    left: 7px;
    top: 77px;
}
.avatar-bs {
    display: block;
    width: 40px;
    height: 40px;
    border-radius: 50%;
    background: #f3f4f6;
    color: #4b5563;
    font: 15px/40px "Noto Sans", sans-serif;
    text-align: center;
}
.collapse {
    position: absolute;
    left: 28px;
    top: -13px;
    width: 25px;
    height: 25px;
    border-radius: 50%;
    border: 2px solid #0f6b3f;
    background: #e8f3ee;
    display: flex;
    align-items: center;
    justify-content: center;
    z-index: 2;
}
.side-nav {
    position: absolute;
    top: 141px;
    left: 7px;
    display: flex;
    flex-direction: column;
    gap: 8px;
}
.side-item {
    width: 40px;
    height: 40px;
    display: flex;
    align-items: center;
    justify-content: center;
}
.side-active {
    background: #e8f3ee;
    border-radius: 8px 0 0 8px;
}
.content {
    flex: 1;
    padding: 17px 16px 0 16px;
    min-width: 0;
}
.topbar {
    height: 49px;
    border-bottom: 1px solid #e5e7eb;
    display: flex;
    align-items: flex-start;
}
.greeting {
    flex: 1;
    font-size: 24px;
    font-weight: 500;
    letter-spacing: -.17px;
    line-height: 40px;
}
.search {
    width: 176px;
    height: 38px;
    background: #e8f3ee;
    border: 1px solid #0f6b3f;
    border-radius: 8px;
    display: flex;
    align-items: center;
    gap: 10px;
    padding-left: 13px;
    color: #44705c;
    font-size: 14px;
}
.round-btn {
    width: 30px;
    height: 30px;
    border-radius: 50%;
    background: #e8f3ee;
    display: flex;
    align-items: center;
    justify-content: center;
    margin: 4px 0 0 8px;
    position: relative;
}
.bell {
    margin-left: 6px;
}
.bell svg {
    flex: none;
    margin: 2px 0 0 0;
}
.badge {
    position: absolute;
    left: -1px;
    top: -2px;
    width: 19px;
    height: 19px;
    border-radius: 50%;
    background: #ef4444;
    color: #fff;
    font-size: 12px;
    font-weight: 700;
    line-height: 19px;
    text-align: center;
}
.summary-row {
    display: flex;
    margin-top: -1px;
}
.job-card {
    width: 1000px;
    height: 102px;
    flex: none;
    border: 3px solid #0f6b3f;
    border-radius: 8px;
    display: flex;
    font-family: "Noto Sans", sans-serif;
}
.job-col {
    height: 100%;
}
.job-main {
    width: 419px;
    border-right: 2px solid #0f6b3f;
    padding: 6px 12px;
}
.job-title {
    font-size: 22.500px;
    font-weight: 700;
    line-height: 32px;
    padding-left: 1px;
}
.pill-problem {
    display: inline-block;
    margin-top: 14px;
    height: 40px;
    padding: 0 16.500px;
    border-radius: 20px;
    background: #e5e7eb;
    font-size: 13.300px;
    font-weight: 500;
    line-height: 40px;
}
.job-status {
    width: 420px;
    border-right: 2px solid #0f6b3f;
    padding: 9px 16px;
}
.status-line {
    display: flex;
    align-items: center;
    gap: 13px;
}
.pill-status {
    width: 114px;
    height: 40px;
    border-radius: 20px;
    background: #e9dfff;
    color: #8b5cf6;
    font-size: 15px;
    font-weight: 500;
    line-height: 40px;
    text-align: center;
}
.job-number {
    font-size: 23.500px;
    font-weight: 700;
}
.created {
    margin-top: 11px;
    padding-left: 1px;
    font-size: 16.800px;
    font-weight: 500;
    line-height: 28px;
}
.job-contact {
    flex: 1;
    padding: 4px 0 0 12px;
}
.contact-line {
    display: flex;
    align-items: center;
    gap: 11px;
}
.contact-line + .contact-line {
    gap: 4px;
}
.pin {
    margin-left: 7px;
}
.muted {
    color: #6b7280;
    font-size: 13px;
    line-height: 20px;
}
.strong {
    font-size: 15.500px;
    font-weight: 500;
    line-height: 24px;
}
.avatar-df {
    width: 32px;
    height: 32px;
    border-radius: 50%;
    background: #f3f4f6;
    border: 1px solid #1e1b4b;
    color: #4b5563;
    font-size: 14px;
    line-height: 30px;
    text-align: center;
    flex: none;
}
.edit-cell {
    flex: 1;
    display: flex;
    align-items: center;
    justify-content: center;
}
.edit-btn {
    width: 98px;
    height: 40px;
    background: #056b4e;
    color: #fff;
    border: none;
    font: 600 16px "Noto Sans", sans-serif;
}
.columns {
    display: flex;
    margin-top: 12px;
}
.details {
    width: 994px;
    flex: none;
}
.sec-title {
    font-size: 20px;
    font-weight: 500;
    letter-spacing: -.2px;
    line-height: 28px;
}
.type-row {
    font-size: 16px;
    font-weight: 300;
    line-height: 25px;
    height: 25px;
    display: flex;
    align-items: center;
    white-space: pre;
    position: relative;
    top: 1px;
}
.type-row .chip {
    margin-left: 1px;
}
.type-row .chip + .chip {
    margin-left: 4px;
}
.chip {
    display: inline-block;
    height: 22px;
    padding: 0 10px;
    border: 1px solid #0f6b3f;
    border-radius: 11px;
    background: #e8f3ee;
    color: #3b5f50;
    font-size: 12px;
    font-weight: 400;
    line-height: 20px;
}
.rule {
    margin: 16px 0;
    border: 0;
    border-top: 2px solid #000;
}
.line {
    font-size: 16px;
    font-weight: 300;
    letter-spacing: .2px;
    line-height: 24px;
}
.line-b {
    font-weight: 500;
    letter-spacing: -.05px;
}
.line-gap {
    margin-top: 4px;
}
.lorem {
    letter-spacing: .13px;
}
.dots {
    margin: 4px 0;
    border: 0;
    border-top: 2px dotted #000;
}
.side-cards {
    width: 248px;
    margin-left: 8px;
    flex: none;
    display: flex;
    flex-direction: column;
    gap: 7px;
}
.card {
    border: 2px solid #0f6b3f;
    border-radius: 8px;
}
.card-title {
    font-size: 20px;
    font-weight: 500;
    letter-spacing: -.2px;
    line-height: 28px;
}
.pay-card {
    height: 168px;
    padding: 0 2px;
}
.pay-head {
    height: 45px;
    border-bottom: 2px dotted #000;
    display: flex;
    align-items: center;
    gap: 8px;
    padding: 0 6px;
}
.pay-labour {
    height: 47px;
    border-bottom: 2px dotted #000;
    display: flex;
    align-items: center;
    justify-content: space-between;
    padding: 0 6px;
}
.amount {
    color: #f04848;
    font-size: 20px;
    font-weight: 300;
}
.leader {
    display: flex;
    align-items: center;
    gap: 5px;
    padding: 0 22px;
    height: 32px;
    font-size: 16px;
    font-weight: 300;
}
.pay-labour + .leader {
    margin-top: 4px;
}
.leader i {
    flex: 1;
    border-top: 2px dotted #000;
}
.loc-card {
    height: 300px;
    padding-top: 7px;
}
.loc-card .card-title {
    padding-left: 8px;
}
.loc-big {
    padding-left: 8px;
    margin-top: 8px;
    font-size: 16px;
    font-weight: 300;
    line-height: 24px;
}
.loc-small {
    padding-left: 8px;
    font-size: 14px;
    font-weight: 300;
    letter-spacing: .1px;
    line-height: 20px;
}
.map {
    position: relative;
    width: 244px;
    height: 144px;
    margin-top: 8px;
    overflow: hidden;
}
.map-tiles {
    display: block;
}
.map-label {
    font: 13.500px "Noto Sans", sans-serif;
    fill: #333;
}
.map-river {
    font: italic 11px "Noto Sans", sans-serif;
    fill: #6a7ee8;
}
.zoom-ctl {
    position: absolute;
    left: 12px;
    top: 12px;
    width: 30px;
    background: #fff;
    border-radius: 2px;
    display: flex;
    flex-direction: column;
    font: 700 22px/30px "Liberation Sans", sans-serif;
    text-align: center;
    color: #000;
}
.zoom-ctl span + span {
    border-top: 1px solid #ccc;
}
.marker {
    position: absolute;
    left: 91px;
    top: 63px;
}

/* scrollbars */
.scrollbar {
    width: 18px;
    flex: none;
    background: #f1f1f1;
    position: relative;
}
.scroll-inner {
    border-right: 1px solid #fff;
}
.thumb {
    position: absolute;
    background: #c1c1c1;
}
.scroll-inner .thumb {
    left: 2px;
    width: 13px;
    top: 20px;
    height: 264px;
}
.scroll-outer .thumb {
    left: 2px;
    width: 14px;
    top: 20px;
    height: 561px;
}
.arrow-up, .arrow-down {
    position: absolute;
    left: 4px;
    width: 0;
    height: 0;
    border-left: 4px solid transparent;
    border-right: 4px solid transparent;
}
.arrow-up {
    top: 6px;
    border-bottom: 4px solid #a3a3a3;
}
.arrow-down {
    bottom: 6px;
    border-top: 4px solid #505050;
}

/* taskbar */
.taskbar {
    height: 30px;
    flex: none;
    background: #3c0b25;
    display: flex;
    align-items: center;
    color: #fff;
    position: relative;
}
.win {
    margin-left: 10px;
    flex: none;
}
.tb-search {
    width: 257px;
    height: 30px;
    margin-left: 11px;
    background: #743350;
    display: flex;
    align-items: center;
    padding-left: 12px;
    gap: 11px;
    font: 14.500px "Noto Sans", sans-serif;
    color: #e8d9e0;
    position: relative;
    flex: none;
}
.tb-art {
    position: absolute;
    right: 0;
    top: 0;
}
.tb-view {
    margin-left: 10px;
    flex: none;
}
.tb-apps {
    display: flex;
    margin-left: 13px;
}
.tb-app {
    width: 37px;
    height: 30px;
    display: flex;
    align-items: center;
    justify-content: center;
    position: relative;
}
.tb-app svg {
    width: 17px;
    height: 17px;
    display: block;
}
.tb-active {
    background: #8a2f56;
}
.tb-on::after {
    content: "";
    position: absolute;
    left: 5px;
    right: 5px;
    bottom: 0;
    height: 2px;
    background: #f3b7cd;
}
.tray {
    position: absolute;
    right: 0;
    top: 0;
    height: 30px;
    width: 300px;
    display: flex;
    align-items: center;
    padding-left: 3px;
    font: 13px "Noto Sans", sans-serif;
}
.tray-rain {
    flex: none;
}
.tray-text {
    margin-left: 9px;
    width: 36px;
    font-size: 14px;
    letter-spacing: -.3px;
}
.tray-i {
    width: 16px;
    height: 16px;
    margin-right: 8px;
    flex: none;
}
.tray-caret {
    width: 13px;
    margin-right: 9px;
}
.tray-time {
    margin-left: 2px;
    width: 48px;
    font-size: 12px;
    letter-spacing: -.35px;
    white-space: nowrap;
}
.tray-note {
    margin-left: 19px;
    flex: none;
}
```
